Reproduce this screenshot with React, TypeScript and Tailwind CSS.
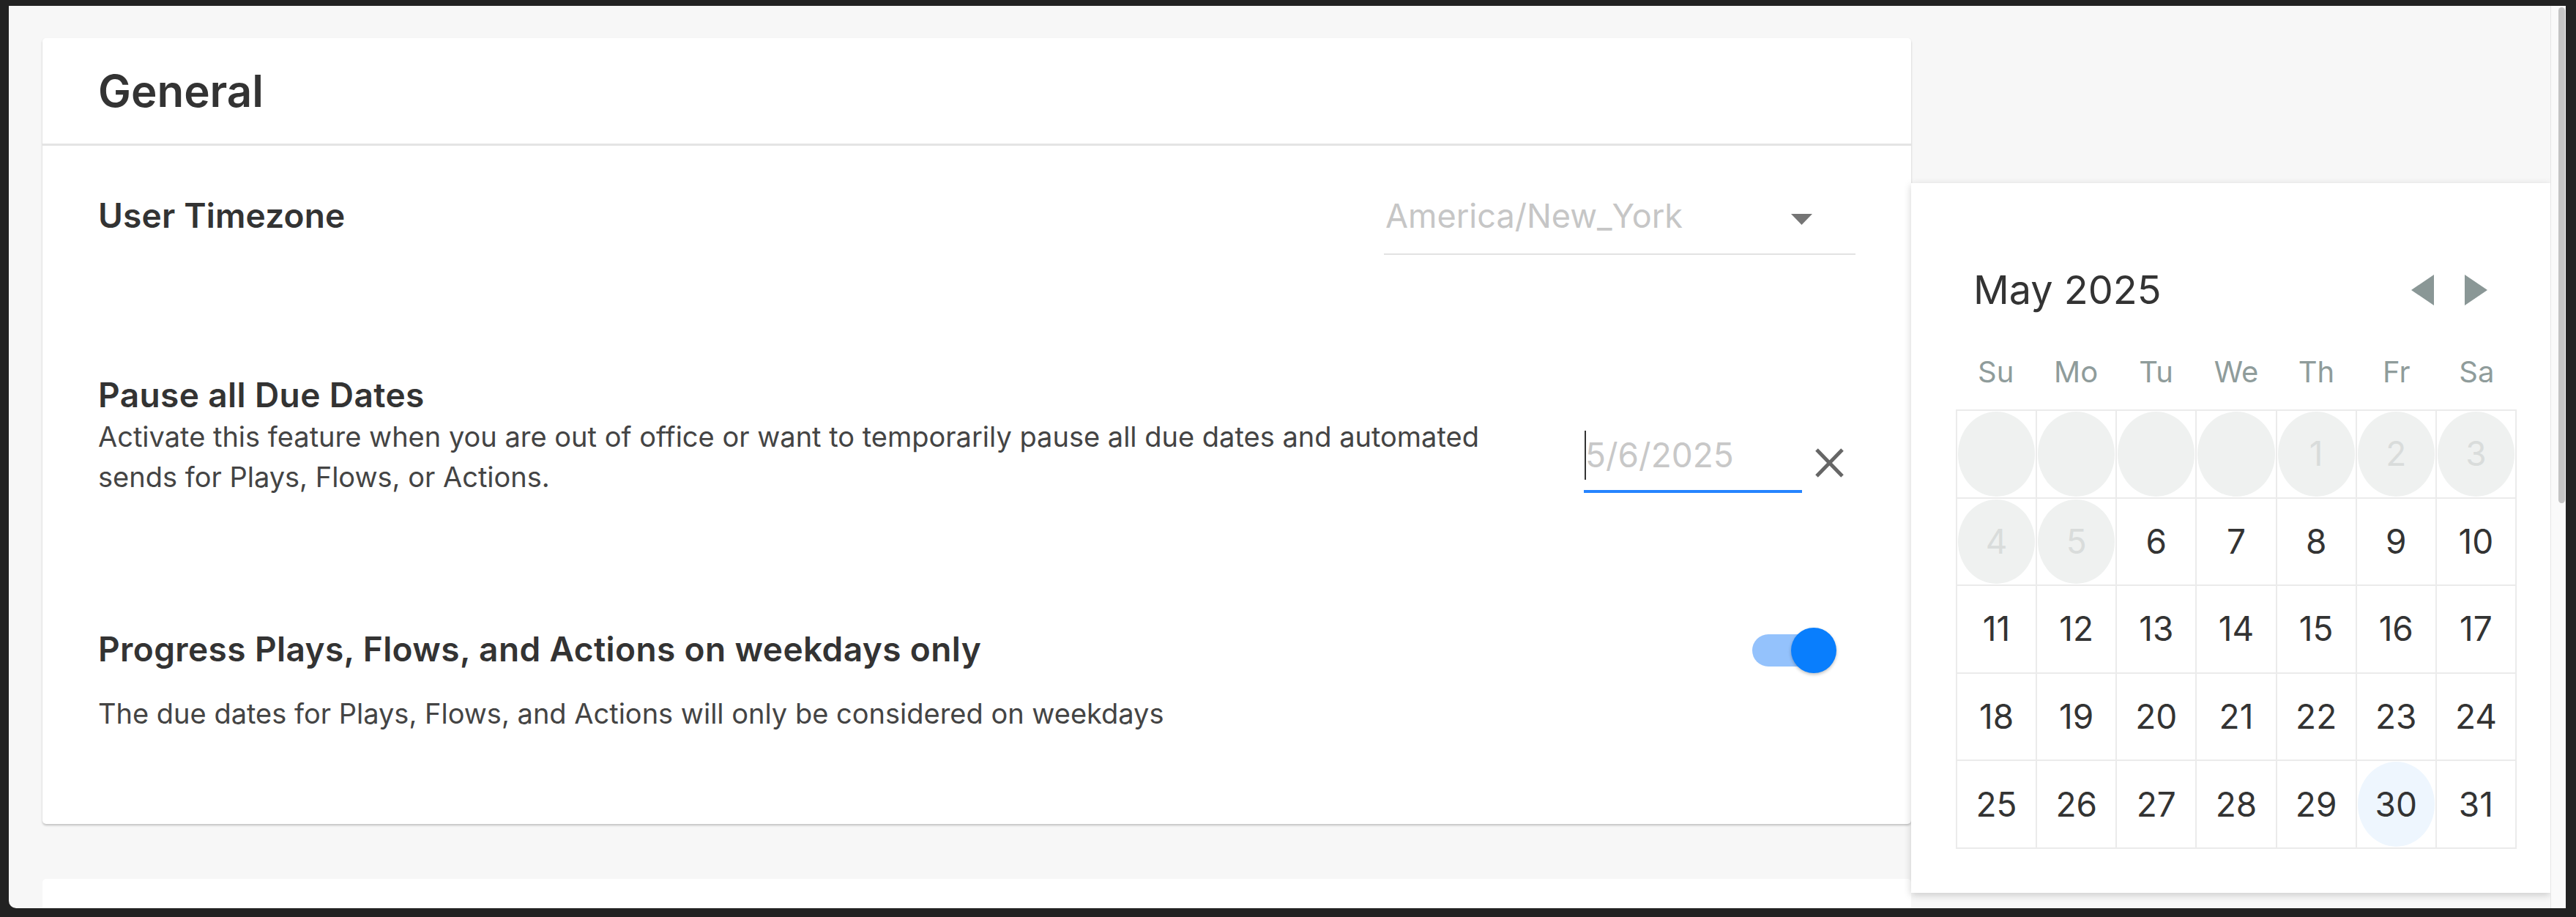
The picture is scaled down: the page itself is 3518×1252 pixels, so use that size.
import React from "react";

const disabledDays: (number | null)[] = [null, null, null, null, 1, 2, 3, 4, 5];

function DayCell({ day, disabled, selected }: { day: number | null; disabled?: boolean; selected?: boolean }) {
  if (disabled) {
    return (
      <div className="bg-white p-[1px]">
        <div className="w-full h-full rounded-[50%] bg-[#eff1f0] flex items-center justify-center text-[46px] text-[#d9dcdb]">
          {day ?? ""}
        </div>
      </div>
    );
  }
  if (selected) {
    return (
      <div className="bg-white p-[1px]">
        <div className="w-full h-full rounded-[50%] bg-[#eef6fe] flex items-center justify-center text-[46px] text-[#333]">
          {day}
        </div>
      </div>
    );
  }
  return <div className="bg-white flex items-center justify-center text-[46px] text-[#333]">{day}</div>;
}

export default function App() {
  const weekdays = ["Su", "Mo", "Tu", "We", "Th", "Fr", "Sa"];
  const normalDays: number[] = [];
  for (let d = 6; d <= 31; d++) normalDays.push(d);

  return (
    <div className="w-[3518px] h-[1252px] bg-[#222222] pt-[8px] pl-[12px] pr-[14px] pb-[12px] font-['Inter',sans-serif]">
      <div className="flex h-full rounded-bl-[10px] overflow-hidden">
        {/* main content */}
        <div className="relative flex-1 bg-[#f7f7f7] overflow-hidden pl-[46px] pt-[44px]">
          {/* General card */}
          <div className="w-[2552px] h-[1073px] bg-white rounded-[5px] shadow-[0_2px_3px_rgba(0,0,0,0.22)]">
            <div className="h-[147px] border-b-[3px] border-[#e4e4e4] flex items-center pl-[76px]">
              <h1 className="text-[60px] font-semibold text-[#333] leading-none">General</h1>
            </div>
            <div className="px-[76px] pt-[68px]">
              {/* User Timezone */}
              <div className="flex justify-between items-start">
                <div className="text-[46px] font-semibold text-[#333] leading-[54px] tracking-[0.2px]">User Timezone</div>
                <div className="relative w-[644px] mt-[1px] pb-[24px] border-b-2 border-[#e2e2e2]">
                  <div className="pl-[2px] text-[45px] leading-[54px] text-[#c6c6c6]">America/New_York</div>
                  <svg className="absolute right-[59px] top-[24px]" width="29" height="15" viewBox="0 0 29 15">
                    <polygon points="0,0 29,0 14.5,15" fill="#757575" />
                  </svg>
                </div>
              </div>

              {/* Pause all Due Dates */}
              <div className="flex justify-between items-start mt-[164px]">
                <div className="max-w-[1960px]">
                  <div className="text-[46px] font-semibold text-[#333] leading-[54px] tracking-[0.4px]">Pause all Due Dates</div>
                  <p className="mt-[3px] text-[38px] leading-[55px] text-[#444]">
                    Activate this feature when you are out of office or want to temporarily pause all due dates and automated sends for Plays, Flows, or Actions.
                  </p>
                </div>
                <div className="flex items-start mt-[82px] mr-[15px]">
                  <div className="relative w-[298px] pb-[21px] border-b-4 border-[#2684ff]">
                    <div className="pl-[2px] text-[46px] leading-[54px] text-[#c8c8c8]">5/6/2025</div>
                    <div className="absolute left-[1px] top-[-6px] w-[2px] h-[67px] bg-[#333]" />
                  </div>
                  <svg className="ml-[17px] mt-[17px]" width="41" height="42" viewBox="0 0 41 42">
                    <line x1="3" y1="3" x2="38" y2="39" stroke="#666" strokeWidth="5" />
                    <line x1="38" y1="3" x2="3" y2="39" stroke="#666" strokeWidth="5" />
                  </svg>
                </div>
              </div>

              {/* Progress weekdays */}
              <div className="flex justify-between items-start mt-[180px]">
                <div>
                  <div className="text-[46px] font-semibold text-[#333] leading-[54px] tracking-[0.4px]">
                    Progress Plays, Flows, and Actions on weekdays only
                  </div>
                  <p className="mt-[34px] text-[38px] leading-[54px] text-[#444]">
                    The due dates for Plays, Flows, and Actions will only be considered on weekdays
                  </p>
                </div>
                <div className="relative w-[115px] h-[62px] mt-[-2px] mr-[26px]">
                  <div className="absolute left-0 top-[9px] w-[108px] h-[44px] rounded-full bg-[#94c2fc]" />
                  <div className="absolute right-0 top-0 w-[62px] h-[62px] rounded-full bg-[#097efd] shadow-[0_2px_4px_rgba(0,0,0,0.25)]" />
                </div>
              </div>
            </div>
          </div>

          {/* Next card */}
          <div className="mt-[75px] w-[2552px] h-[80px] bg-white rounded-t-[5px]" />

          {/* Date picker popover */}
          <div className="absolute left-[2598px] top-[242px] w-[873px] h-[969px] bg-white shadow-[0_3px_10px_rgba(0,0,0,0.18)]">
            <div className="flex items-start pt-[118px] pl-[85px] pr-[86px]">
              <div className="text-[54px] leading-[56px] text-[#333]">May 2025</div>
              <div className="ml-auto flex items-center gap-[42px] mt-[7px]">
                <svg width="31" height="42" viewBox="0 0 31 42">
                  <polygon points="31,0 31,42 0,21" fill="#8a9796" />
                </svg>
                <svg width="31" height="42" viewBox="0 0 31 42">
                  <polygon points="0,0 0,42 31,21" fill="#8a9796" />
                </svg>
              </div>
            </div>
            <div className="ml-[61px] w-[766px] mt-[59px] grid grid-cols-7">
              {weekdays.map((w) => (
                <div key={w} className="text-center text-[40px] leading-[50px] text-[#8f9c9b]">
                  {w}
                </div>
              ))}
            </div>
            <div className="ml-[61px] mt-[26px] w-[766px] h-[600px] grid grid-cols-7 grid-rows-5 gap-[2px] p-[2px] bg-[#ebebeb]">
              {disabledDays.map((d, i) => (
                <DayCell key={"d" + i} day={d} disabled />
              ))}
              {normalDays.map((d) => (
                <DayCell key={d} day={d} selected={d === 30} />
              ))}
            </div>
          </div>
        </div>

        {/* scrollbar */}
        <div className="w-[21px] bg-[#fafafa] border-l border-[#e6e6e6]">
          <div className="mt-[2px] ml-[10px] w-[9px] h-[677px] rounded-full bg-[#c4c4c4]" />
        </div>
      </div>
    </div>
  );
}
